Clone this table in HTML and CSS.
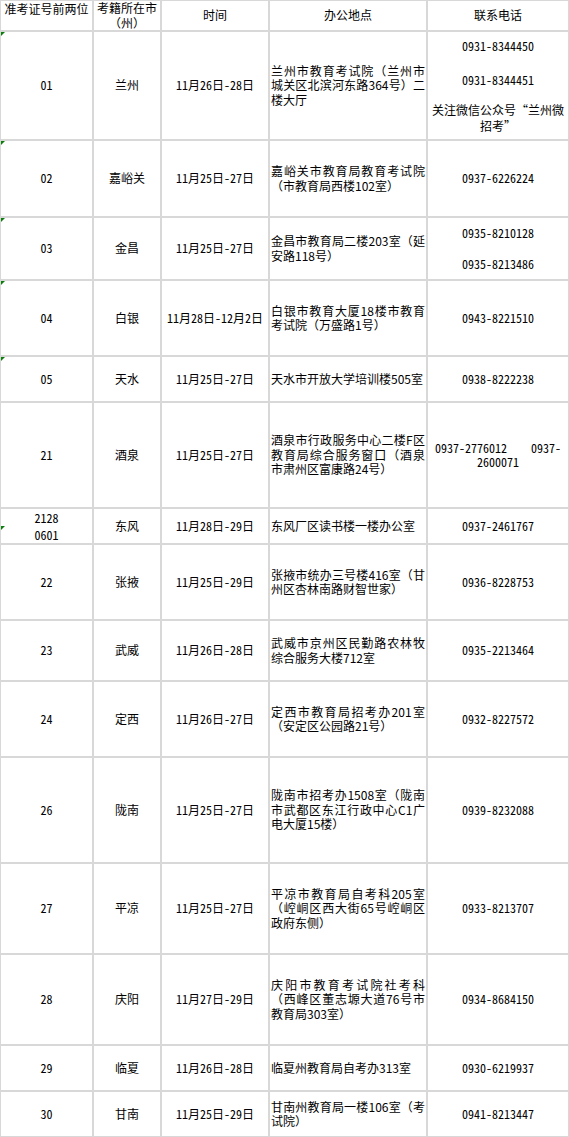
FILE: index.html
```html
<!DOCTYPE html>
<html lang="zh-CN">
<head>
<meta charset="utf-8">
<title>办公地点及联系电话</title>
<link rel="stylesheet" href="styles.css">
</head>
<body>
<table class="sheet">
  <tr class="h31">
    <th class="w1 top">准考证号前两位</th>
    <th class="w2">考籍所在市（州）</th>
    <th class="w3">时间</th>
    <th class="w4">办公地点</th>
    <th class="w5">联系电话</th>
  </tr>
  <tr class="h109">
    <td><i class="mark"></i>01</td>
    <td>兰州</td>
    <td>11月26日-28日</td>
    <td class="addr">兰州市教育考试院（兰州市城关区北滨河东路364号）二楼大厅</td>
    <td class="ph"><p>0931-8344450</p><p class="gap-l">0931-8344451</p><p class="fw">关注微信公众号“兰州微招考”</p></td>
  </tr>
  <tr class="h77">
    <td><i class="mark"></i>02</td>
    <td>嘉峪关</td>
    <td>11月25日-27日</td>
    <td class="addr">嘉峪关市教育局教育考试院（市教育局西楼102室）</td>
    <td class="ph">0937-6226224</td>
  </tr>
  <tr class="h63">
    <td><i class="mark"></i>03</td>
    <td>金昌</td>
    <td>11月25日-27日</td>
    <td class="addr">金昌市教育局二楼203室（延安路118号）</td>
    <td class="ph"><p>0935-8210128</p><p>0935-8213486</p></td>
  </tr>
  <tr class="h76">
    <td><i class="mark"></i>04</td>
    <td>白银</td>
    <td>11月28日-12月2日</td>
    <td class="addr">白银市教育大厦18楼市教育考试院（万盛路1号）</td>
    <td class="ph">0943-8221510</td>
  </tr>
  <tr class="h46">
    <td><i class="mark"></i>05</td>
    <td>天水</td>
    <td>11月25日-27日</td>
    <td class="addr">天水市开放大学培训楼505室</td>
    <td class="ph">0938-8222238</td>
  </tr>
  <tr class="h106">
    <td>21</td>
    <td>酒泉</td>
    <td>11月25日-27日</td>
    <td class="addr">酒泉市行政服务中心二楼F区教育局综合服务窗口（酒泉市肃州区富康路24号）</td>
    <td class="ph">0937-2776012&nbsp;&nbsp;&nbsp;&nbsp;0937-<br>2600071</td>
  </tr>
  <tr class="h36">
    <td class="pair"><i class="mark mid"></i>2128<br>0601</td>
    <td>东风</td>
    <td>11月28日-29日</td>
    <td class="addr">东风厂区读书楼一楼办公室</td>
    <td class="ph">0937-2461767</td>
  </tr>
  <tr class="h76">
    <td>22</td>
    <td>张掖</td>
    <td>11月25日-29日</td>
    <td class="addr">张掖市统办三号楼416室（甘州区杏林南路财智世家）</td>
    <td class="ph">0936-8228753</td>
  </tr>
  <tr class="h61">
    <td>23</td>
    <td>武威</td>
    <td>11月26日-28日</td>
    <td class="addr">武威市京州区民勤路农林牧综合服务大楼712室</td>
    <td class="ph">0935-2213464</td>
  </tr>
  <tr class="h76">
    <td>24</td>
    <td>定西</td>
    <td>11月26日-27日</td>
    <td class="addr">定西市教育局招考办201室（安定区公园路21号）</td>
    <td class="ph">0932-8227572</td>
  </tr>
  <tr class="h106">
    <td>26</td>
    <td>陇南</td>
    <td>11月25日-27日</td>
    <td class="addr">陇南市招考办1508室（陇南市武都区东江行政中心C1广电大厦15楼）</td>
    <td class="ph">0939-8232088</td>
  </tr>
  <tr class="h91">
    <td>27</td>
    <td>平凉</td>
    <td>11月25日-27日</td>
    <td class="addr">平凉市教育局自考科205室（崆峒区西大街65号崆峒区政府东侧）</td>
    <td class="ph">0933-8213707</td>
  </tr>
  <tr class="h91">
    <td>28</td>
    <td>庆阳</td>
    <td>11月27日-29日</td>
    <td class="addr">庆阳市教育考试院社考科（西峰区董志塬大道76号市教育局303室）</td>
    <td class="ph">0934-8684150</td>
  </tr>
  <tr class="h46">
    <td>29</td>
    <td>临夏</td>
    <td>11月26日-28日</td>
    <td class="addr">临夏州教育局自考办313室</td>
    <td class="ph">0930-6219937</td>
  </tr>
  <tr class="h46">
    <td>30</td>
    <td>甘南</td>
    <td>11月25日-29日</td>
    <td class="addr">甘南州教育局一楼106室（考试院）</td>
    <td class="ph">0941-8213447</td>
  </tr>
</table>
</body>
</html>
```
FILE: styles.css
```css
html, body {
  margin: 0;
  padding: 0;
  background: #fff;
}

body {
  font-family: "Noto Sans CJK SC", "Noto Sans CJK JP", sans-serif;
  font-size: 12px;
  color: #000;
  font-feature-settings: "hwid" 1;
  text-spacing-trim: space-all;
}

.sheet {
  border-collapse: separate;
  border-spacing: 0;
  table-layout: fixed;
  width: 569px;
}

.sheet th,
.sheet td {
  box-sizing: border-box;
  position: relative;
  border: 1px solid #d8d8d8;
  padding: 0;
  font-weight: normal;
  line-height: 14.5px;
  text-align: center;
  vertical-align: middle;
}

.sheet th {
  font-feature-settings: normal;
}

.w1 { width: 93px; }
.w2 { width: 68px; }
.w3 { width: 108px; }
.w4 { width: 158px; }
.w5 { width: 142px; }

.sheet th.top {
  vertical-align: top;
  padding-top: 1px;
}

.h31 { height: 31px; }
.h36 { height: 36px; }
.h46 { height: 46px; }
.h61 { height: 61px; }
.h63 { height: 63px; }
.h76 { height: 76px; }
.h77 { height: 77px; }
.h91 { height: 91px; }
.h106 { height: 106px; }
.h109 { height: 109px; }

.sheet td.addr {
  text-align: justify;
  padding: 0 1px;
  font-feature-settings: normal;
}

.sheet td.pair {
  line-height: 17px;
}

.ph p {
  margin: 0;
  line-height: 16px;
}

.ph p + p {
  margin-top: 15px;
}

.ph p.gap-l {
  margin-top: 18px;
}

.ph p.fw {
  margin-top: 14px;
  font-feature-settings: "fwid" 1;
}

.mark {
  position: absolute;
  top: 0;
  left: 0;
  width: 0;
  height: 0;
  border-top: 4px solid #0b7d0b;
  border-right: 4px solid transparent;
}

.mark.mid {
  top: 17px;
}
```
